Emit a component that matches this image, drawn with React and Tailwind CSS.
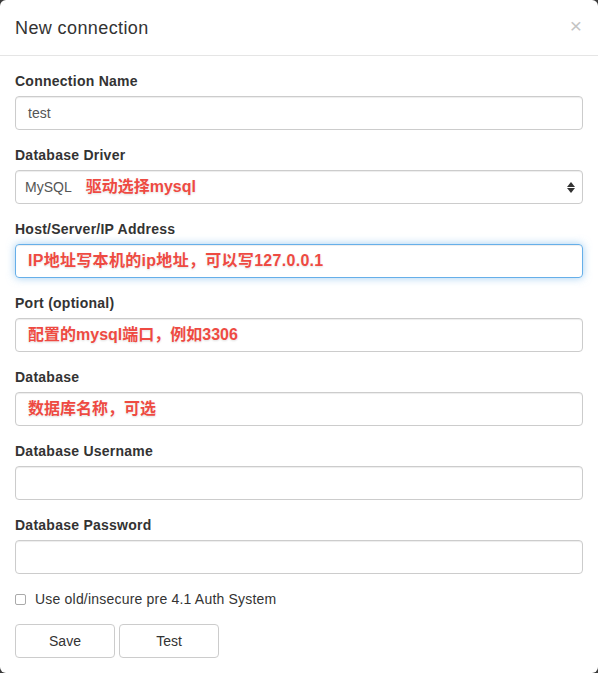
import React from "react";

const note = "font-bold text-[16px] text-[#ee4a42] [text-shadow:0_0_2px_#ffffff,0_1px_2px_rgba(0,0,0,0.15)]";

function Field({ label, children }) {
  return (
    <div className="mb-[15px]">
      <div className="h-5 mb-[5px] text-[14px] leading-5 font-bold text-[#333] tracking-[0.25px]">{label}</div>
      {children}
    </div>
  );
}

function Box({ focus, children }) {
  return (
    <div
      className={
        "h-[34px] rounded-[4px] border px-3 flex items-center text-[14px] text-[#555] " +
        (focus
          ? "border-[#66afe9] shadow-[inset_0_1px_1px_rgba(0,0,0,0.075),0_0_8px_rgba(102,175,233,0.6)]"
          : "border-[#ccc] shadow-[inset_0_1px_1px_rgba(0,0,0,0.075)]")
      }
    >
      {children}
    </div>
  );
}

export default function App() {
  return (
    <div
      className="w-[598px] h-[673px] bg-[#3a3a3a]"
      style={{ fontFamily: '"Liberation Sans", "Noto Sans CJK SC", sans-serif' }}
    >
      <div className="w-full h-full bg-white rounded-[6px] overflow-hidden">
        {/* header */}
        <div className="h-[56px] border-b border-[#e5e5e5] px-[15px] flex items-center justify-between">
          <h4 className="text-[18px] text-[#333] pt-[1px] tracking-[0.4px]">New connection</h4>
          <span className="text-[21px] text-[#c4c4c4] leading-none -mt-1 mr-[1px]">×</span>
        </div>

        {/* body */}
        <div className="px-[15px] pt-[15px]">
          <Field label="Connection Name">
            <Box>test</Box>
          </Field>
          <Field label="Database Driver">
            <Box>
              <span className="ml-[-3px]">MySQL</span>
              <span className={note + " ml-[14px]"}>驱动选择mysql</span>
              <span className="ml-auto flex flex-col items-center gap-[1px] mr-[-5px]">
                <svg width="8" height="5" viewBox="0 0 8 5"><path d="M4 0L8 5H0z" fill="#333" /></svg>
                <svg width="8" height="5" viewBox="0 0 8 5"><path d="M0 0h8L4 5z" fill="#333" /></svg>
              </span>
            </Box>
          </Field>
          <Field label="Host/Server/IP Address">
            <Box focus>
              <span className={note + " tracking-[0.3px]"}>IP地址写本机的ip地址，可以写127.0.0.1</span>
            </Box>
          </Field>
          <Field label="Port (optional)">
            <Box>
              <span className={note}>配置的mysql端口，例如3306</span>
            </Box>
          </Field>
          <Field label="Database">
            <Box>
              <span className={note}>数据库名称，可选</span>
            </Box>
          </Field>
          <Field label="Database Username">
            <Box />
          </Field>
          <Field label="Database Password">
            <Box />
          </Field>

          <div className="flex items-center h-5 mt-[1px] mb-[15px]">
            <span className="w-[11px] h-[11px] border border-[#aaa] rounded-[2px] bg-white"></span>
            <span className="ml-[9px] text-[14px] text-[#333] tracking-[0.2px]">Use old/insecure pre 4.1 Auth System</span>
          </div>

          <div className="flex gap-1">
            <div className="w-[100px] h-[34px] border border-[#ccc] rounded-[4px] flex items-center justify-center text-[14px] text-[#333]">Save</div>
            <div className="w-[100px] h-[34px] border border-[#ccc] rounded-[4px] flex items-center justify-center text-[14px] text-[#333]">Test</div>
          </div>
        </div>
      </div>
    </div>
  );
}
